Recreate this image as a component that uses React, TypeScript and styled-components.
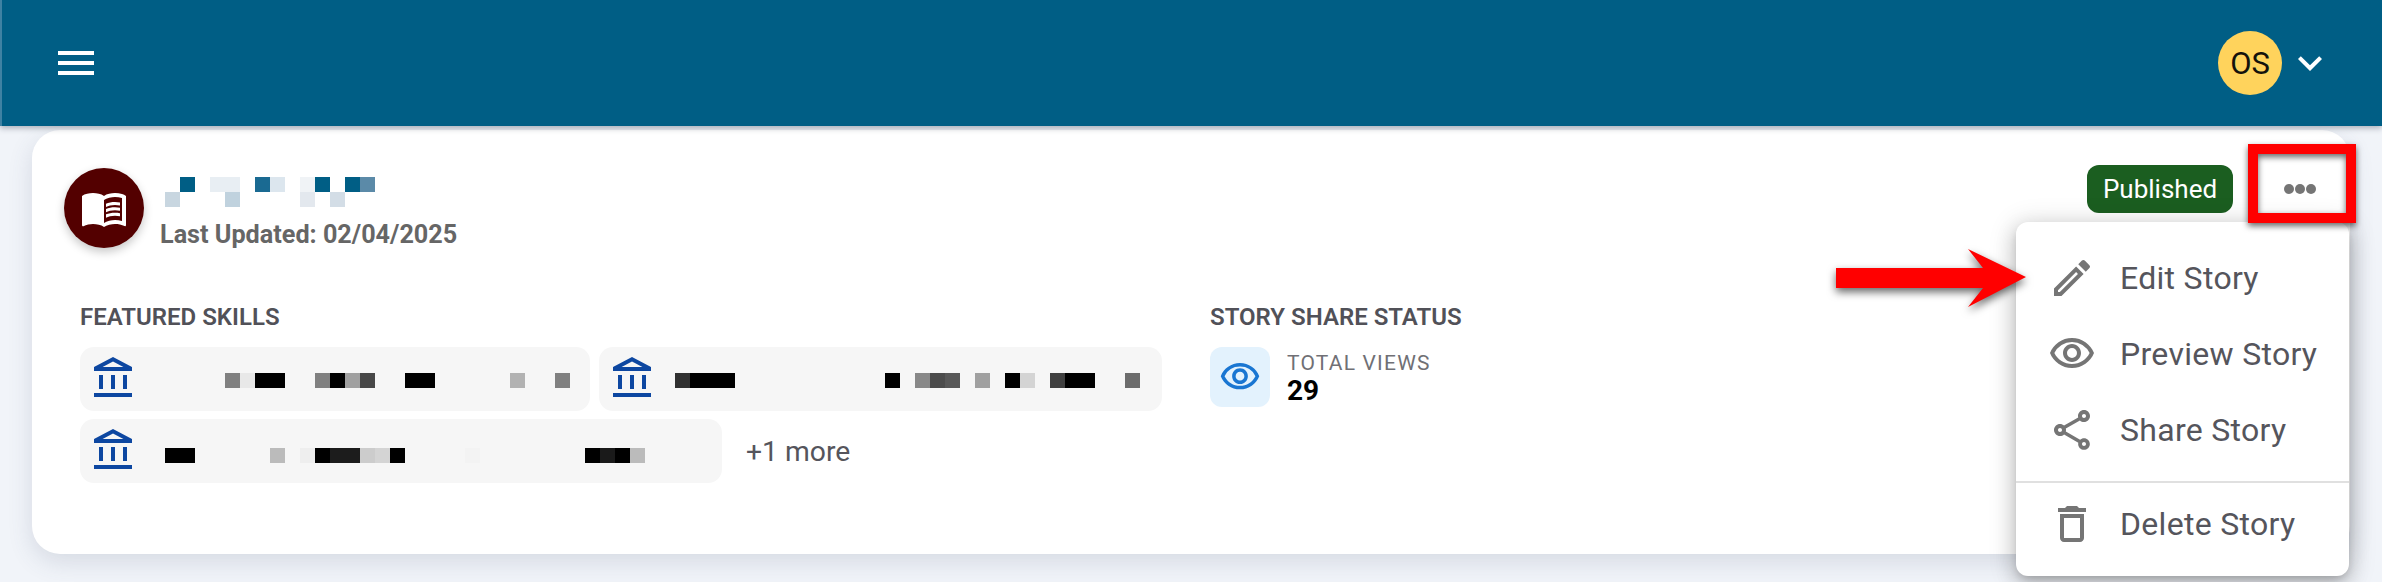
import React from "react";
import styled, { createGlobalStyle } from "styled-components";
import {
  MdMenu,
  MdExpandMore,
  MdMenuBook,
  MdOutlineAccountBalance,
  MdOutlineVisibility,
  MdOutlineEdit,
  MdOutlineShare,
  MdDeleteOutline
} from "react-icons/md";

const GlobalStyle = createGlobalStyle`
  html, body {
    margin: 0;
    padding: 0;
    width: 2382px;
    height: 582px;
    overflow: hidden;
    background: #f1f4f9;
    font-family: Roboto, "Liberation Sans", sans-serif;
  }
`;

const Page = styled.div`
  width: 2382px;
  height: 582px;
  overflow: hidden;
  display: flex;
  flex-direction: column;
`;

const TopBar = styled.header`
  position: relative;
  z-index: 2;
  flex-shrink: 0;
  height: 126px;
  box-sizing: border-box;
  display: flex;
  align-items: center;
  justify-content: space-between;
  padding: 0 48px 0 50px;
  background: #005e85;
  border-left: 2px solid #3f82a3;
  box-shadow: 0 2px 6px rgba(30, 40, 60, 0.35);
  color: #fff;
`;

const UserBox = styled.div`
  display: flex;
  align-items: center;
  gap: 4px;
`;

const UserAvatar = styled.div`
  width: 64px;
  height: 64px;
  border-radius: 50%;
  display: flex;
  align-items: center;
  justify-content: center;
  background: #ffd35c;
  color: #14120c;
  font-size: 31px;
`;

const Main = styled.main`
  padding: 4px 32px 0;
`;

const Card = styled.section`
  position: relative;
  height: 424px;
  box-sizing: border-box;
  padding: 24px 4px 0 32px;
  background: #fff;
  border-radius: 28px;
  box-shadow: 0 8px 24px rgba(70, 80, 110, 0.16);
`;

const CardTop = styled.div`
  display: flex;
  justify-content: space-between;
  align-items: flex-start;
`;

const StoryInfo = styled.div`
  display: flex;
  align-items: flex-start;
  gap: 16px;
  padding-top: 14px;
`;

const StoryAvatar = styled.div`
  width: 80px;
  height: 80px;
  border-radius: 50%;
  display: flex;
  align-items: center;
  justify-content: center;
  background: #530000;
  color: #fff;
  box-shadow: 0 4px 10px rgba(0, 0, 0, 0.22);
`;

const StoryText = styled.div`
  display: flex;
  flex-direction: column;
  padding-top: 9px;
`;

const Updated = styled.div`
  margin-top: 13px;
  font-size: 25.2px;
  line-height: 30px;
  font-weight: 700;
  color: #666;
`;

const Mosaic = styled.div<{ $x?: number; $y?: number }>`
  display: grid;
  align-self: flex-start;
  grid-auto-columns: 15px;
  grid-auto-rows: 15px;
  margin-left: ${(p) => p.$x || 0}px;
  margin-top: ${(p) => p.$y || 0}px;
`;

const Cell = styled.span<{ $col: number; $row: number; $c: string }>`
  grid-column: ${(p) => p.$col + 1};
  grid-row: ${(p) => p.$row + 1};
  background: ${(p) => p.$c};
`;

const Actions = styled.div`
  display: flex;
  align-items: center;
  gap: 25px;
  padding: 5px 4px 0 0;
`;

const Badge = styled.div`
  width: 146px;
  height: 48px;
  display: flex;
  align-items: center;
  justify-content: center;
  border-radius: 12px;
  background: #1b5e20;
  color: #fff;
  font-size: 26px;
`;

const MoreButton = styled.button`
  width: 84px;
  height: 59px;
  padding: 0;
  border: none;
  background: none;
  display: flex;
  align-items: center;
  justify-content: center;
  color: #757575;
`;

const Sections = styled.div`
  display: flex;
  margin-top: 54px;
  padding-left: 16px;
`;

const SkillsColumn = styled.div`
  width: 1130px;
  flex-shrink: 0;
`;

const SectionLabel = styled.h3`
  margin: 0 0 17px;
  font-size: 24px;
  line-height: 26px;
  font-weight: 600;
  color: #515158;
`;

const SkillList = styled.div`
  display: flex;
  flex-wrap: wrap;
  align-items: center;
  gap: 8px 9px;
  width: 1100px;
`;

const Chip = styled.div<{ $width: number }>`
  width: ${(p) => p.$width}px;
  height: 64px;
  box-sizing: border-box;
  padding: 8px 10px;
  display: flex;
  border-radius: 14px;
  background: #f6f6f6;
  color: #0d47a1;
`;

const MoreText = styled.span`
  margin-left: 15px;
  font-size: 28.3px;
  color: #55555c;
`;

const ShareStat = styled.div`
  display: flex;
  gap: 17px;
`;

const StatIcon = styled.div`
  width: 60px;
  height: 60px;
  border-radius: 12px;
  display: flex;
  align-items: center;
  justify-content: center;
  background: #e3f2fd;
  color: #1976d2;
`;

const StatText = styled.div`
  padding-top: 4px;
`;

const StatLabel = styled.div`
  font-size: 21px;
  line-height: 24px;
  letter-spacing: 1.2px;
  color: #707075;
`;

const StatValue = styled.div`
  margin-top: 3px;
  font-size: 28px;
  line-height: 26px;
  font-weight: 700;
  color: #000;
`;

const Menu = styled.div`
  position: absolute;
  z-index: 3;
  top: 92px;
  right: 1px;
  width: 333px;
  box-sizing: border-box;
  padding: 18px 0 14px;
  background: #fff;
  border-radius: 12px;
  box-shadow: 0 5px 10px -3px rgba(0, 0, 0, 0.2), 0 8px 20px 2px rgba(0, 0, 0, 0.14),
    0 3px 26px 4px rgba(0, 0, 0, 0.12);
`;

const MenuItem = styled.div`
  height: 76px;
  display: flex;
  align-items: center;
  gap: 24px;
  padding-left: 32px;
  font-size: 32px;
  letter-spacing: 0.3px;
  color: #55555c;

  & > svg {
    color: #757575;
    flex-shrink: 0;
  }
`;

const MenuDivider = styled.hr`
  margin: 13px 0 3px;
  border: none;
  height: 2px;
  background: #e0e0e0;
`;

const Highlight = styled.div`
  position: absolute;
  z-index: 4;
  top: 14px;
  right: -6px;
  width: 108px;
  height: 79px;
  box-sizing: border-box;
  border: 10px solid #f00;
  filter: drop-shadow(0 3px 3px rgba(0, 0, 0, 0.6));
`;

const Arrow = styled.svg`
  position: absolute;
  z-index: 4;
  left: 1804px;
  top: 119px;
  filter: drop-shadow(0 4px 4px rgba(0, 0, 0, 0.6));
`;

type Block = [number, string];

const titleTop: Block[] = [
  [1, "#005e85"],
  [3, "#e8eef3"],
  [4, "#e8eef3"],
  [6, "#1a6a92"],
  [7, "#dce6ee"],
  [9, "#f0f3f6"],
  [10, "#005e85"],
  [12, "#005e85"],
  [13, "#5b8aa8"]
];
const titleBottom: Block[] = [
  [0, "#c8d6e0"],
  [4, "#c0d2de"],
  [9, "#e3e8ee"],
  [11, "#d3dde6"]
];

const skills: { width: number; x: number; y: number; blocks: Block[] }[] = [
  {
    width: 510,
    x: 12,
    y: 18,
    blocks: [
      [5, "#808080"],
      [6, "#e8e8e8"],
      [7, "#000"],
      [8, "#000"],
      [11, "#808080"],
      [12, "#000"],
      [13, "#a0a0a0"],
      [14, "#484848"],
      [17, "#000"],
      [18, "#000"],
      [24, "#b2b2b2"],
      [27, "#808080"]
    ]
  },
  {
    width: 563,
    x: 18,
    y: 18,
    blocks: [
      [0, "#303030"],
      [1, "#000"],
      [2, "#000"],
      [3, "#000"],
      [14, "#000"],
      [16, "#888"],
      [17, "#4c4c4c"],
      [18, "#585858"],
      [20, "#a0a0a0"],
      [22, "#000"],
      [23, "#d4d4d4"],
      [25, "#404040"],
      [26, "#000"],
      [27, "#000"],
      [30, "#6c6c6c"]
    ]
  },
  {
    width: 642,
    x: 12,
    y: 21,
    blocks: [
      [1, "#000"],
      [2, "#000"],
      [8, "#bbb"],
      [10, "#eee"],
      [11, "#000"],
      [12, "#1c1c1c"],
      [13, "#1c1c1c"],
      [14, "#ccc"],
      [15, "#d4d4d4"],
      [16, "#000"],
      [21, "#f3f3f3"],
      [29, "#000"],
      [30, "#1a1a1a"],
      [31, "#000"],
      [32, "#bbb"]
    ]
  }
];

export default function App() {
  return (
    <Page>
      <GlobalStyle />
      <TopBar>
        <MdMenu size={48} />
        <UserBox>
          <UserAvatar>OS</UserAvatar>
          <MdExpandMore size={48} />
        </UserBox>
      </TopBar>
      <Main>
        <Card>
          <CardTop>
            <StoryInfo>
              <StoryAvatar>
                <MdMenuBook size={48} />
              </StoryAvatar>
              <StoryText>
                <Mosaic $x={5}>
                  {titleTop.map(([col, c]) => (
                    <Cell key={col} $col={col} $row={0} $c={c} />
                  ))}
                  {titleBottom.map(([col, c]) => (
                    <Cell key={col} $col={col} $row={1} $c={c} />
                  ))}
                </Mosaic>
                <Updated>Last Updated: 02/04/2025</Updated>
              </StoryText>
            </StoryInfo>
            <Actions>
              <Badge>Published</Badge>
              <MoreButton type="button">
                <svg width="32" height="10" viewBox="0 0 32 10" fill="currentColor">
                  <circle cx="5" cy="5" r="5" />
                  <circle cx="16" cy="5" r="5" />
                  <circle cx="27" cy="5" r="5" />
                </svg>
              </MoreButton>
            </Actions>
          </CardTop>
          <Sections>
            <SkillsColumn>
              <SectionLabel>FEATURED SKILLS</SectionLabel>
              <SkillList>
                {skills.map((skill) => (
                  <Chip key={skill.width} $width={skill.width}>
                    <MdOutlineAccountBalance size={48} />
                    <Mosaic $x={skill.x} $y={skill.y}>
                      {skill.blocks.map(([col, c]) => (
                        <Cell key={col} $col={col} $row={0} $c={c} />
                      ))}
                    </Mosaic>
                  </Chip>
                ))}
                <MoreText>+1 more</MoreText>
              </SkillList>
            </SkillsColumn>
            <div>
              <SectionLabel>STORY SHARE STATUS</SectionLabel>
              <ShareStat>
                <StatIcon>
                  <MdOutlineVisibility size={42} />
                </StatIcon>
                <StatText>
                  <StatLabel>TOTAL VIEWS</StatLabel>
                  <StatValue>29</StatValue>
                </StatText>
              </ShareStat>
            </div>
          </Sections>
          <Menu>
            <MenuItem>
              <MdOutlineEdit size={48} />
              Edit Story
            </MenuItem>
            <MenuItem>
              <MdOutlineVisibility size={48} />
              Preview Story
            </MenuItem>
            <MenuItem>
              <MdOutlineShare size={48} />
              Share Story
            </MenuItem>
            <MenuDivider />
            <MenuItem>
              <MdDeleteOutline size={48} />
              Delete Story
            </MenuItem>
          </Menu>
          <Highlight />
          <Arrow width="200" height="70" viewBox="0 0 200 70">
            <path d="M0 19H147L132 0L190 28L132 58L147 39H0Z" fill="#f00" />
          </Arrow>
        </Card>
      </Main>
    </Page>
  );
}
